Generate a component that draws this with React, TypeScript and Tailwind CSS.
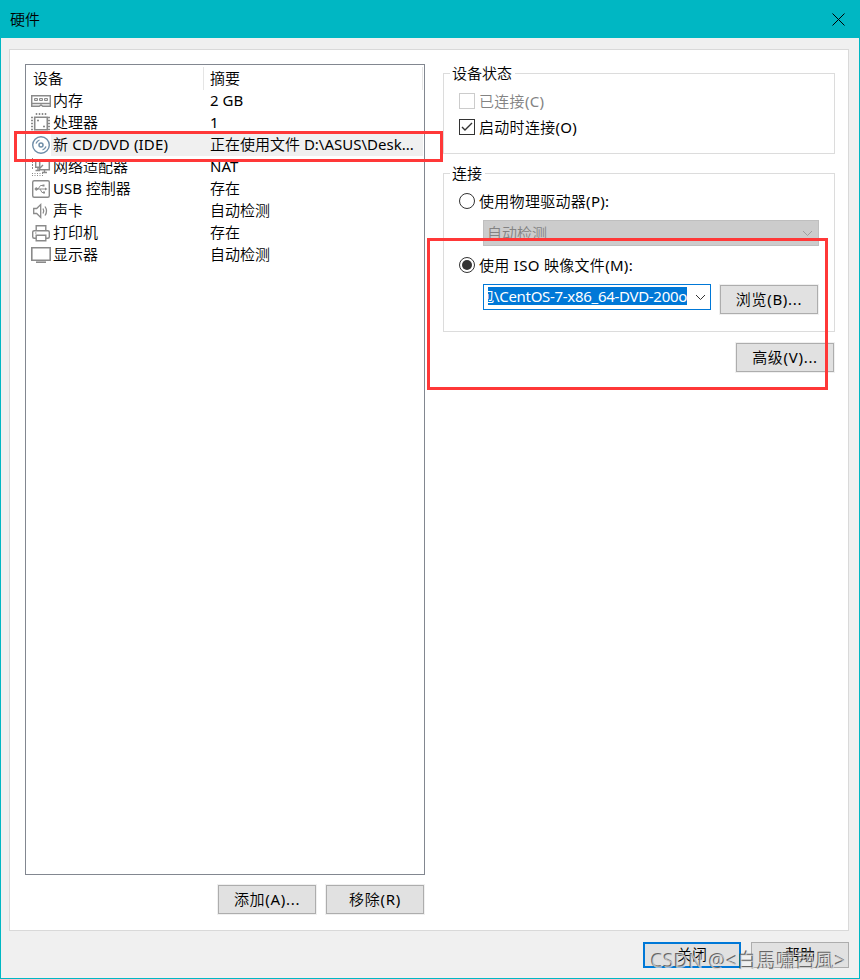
import type { ReactNode } from "react";
import clsx from "clsx";

interface Device {
  name: string;
  summary: string;
  icon: ReactNode;
  selected?: boolean;
}

const MemoryIcon = () => (
  <svg width="20" height="22" viewBox="0 0 20 22" fill="none" stroke="#8a8a8a">
    <path d="M.7 5.700h18.600v7.800H.7z" strokeWidth="1.500" />
    <path d="M3.500 8.500h3v2h-3zM8.500 8.500h3v2h-3zM13.500 8.500h3v2h-3z" fill="#ddd" />
    <path d="M.7 13v3.300h7.500l1.800-1.300 1.800 1.300h7.500V13" strokeWidth="1.500" />
  </svg>
);

const CpuIcon = () => (
  <svg width="20" height="22" viewBox="0 0 20 22" fill="none" stroke="#8a8a8a">
    <path d="M3.700 5.200h12.600v12.600H3.700z" strokeWidth="1.600" />
    <path
      d="M5.500 1v3M8.500 1v3M11.500 1v3M14.500 1v3M5.500 19v2M8.500 19v2M11.500 19v2M14.500 19v2M0 5.500h3M0 8.500h3M0 11.500h3M0 14.500h3M0 17.500h3M17 5.500h3M17 8.500h3M17 11.500h3M17 14.500h3M17 17.500h3"
      strokeDasharray="2 1"
      strokeWidth="1.500"
    />
    <path d="M6 8.500h2M7 7.500v2M12 14.500h2M13 13.500v2" strokeWidth="1.200" />
  </svg>
);

const DiscIcon = () => (
  <svg width="20" height="22" viewBox="0 0 20 22" fill="none" stroke="#6f8da8">
    <circle cx="10" cy="11" r="8.300" strokeWidth="1.400" />
    <circle cx="10" cy="11" r="2" strokeWidth="1.500" />
    <path d="M5 9.500Q6 7 8.500 6M15 12.500Q14 15 11.500 16" strokeWidth="1.300" />
  </svg>
);

const NetworkIcon = () => (
  <svg width="20" height="22" viewBox="0 0 20 22" fill="none" stroke="#8a8a8a">
    <path d="M1.500 2v11.500" strokeDasharray="2 1" />
    <path d="M9 4.700H4.700v6.600H8M7 11.500v3M4.500 14.500H9" strokeWidth="1.400" />
    <path d="M8.700 5.200h9.600v8.600H8.700z" fill="#fff" strokeWidth="1.500" />
    <path d="M9 12L12 9M13.500 14v2M11 16.500h5" strokeWidth="1.400" />
    <path d="M1 17.500h12M1 19.500h12" strokeDasharray="1 1.500" />
  </svg>
);

const UsbIcon = () => (
  <svg width="20" height="22" viewBox="0 0 20 22" fill="none" stroke="#8a8a8a">
    <rect x="1.700" y="2.700" width="16.600" height="16.600" rx="1.500" strokeWidth="1.400" />
    <path d="M5 11h10M7 11l2.500-3.500H12M9 11l2 3.500h1.500" />
    <circle cx="5.300" cy="11" r="1.200" fill="#8a8a8a" />
    <path d="M14 9.500l2.500 1.500-2.500 1.500zM11.500 6.500h2v2h-2zM12 13.500h2v2h-2z" fill="#8a8a8a" stroke="none" />
  </svg>
);

const SoundIcon = () => (
  <svg width="20" height="22" viewBox="0 0 20 22" fill="none" stroke="#8a8a8a" strokeWidth="1.300">
    <path d="M2.700 8.500h3l4-4v13l-4-4h-3z" />
    <path d="M12 8.500q1.500 2.500 0 5M14 6.500q3 4.500 0 9" />
  </svg>
);

const PrinterIcon = () => (
  <svg width="20" height="22" viewBox="0 0 20 22" fill="none" stroke="#8a8a8a" strokeWidth="1.400">
    <path d="M5.200 8.500V3.700h9.600v4.800" />
    <path d="M5 16.300H3.200q-1.500 0-1.500-1.500V10q0-1.300 1.500-1.300h13.600q1.500 0 1.500 1.300v4.800q0 1.500-1.500 1.500H15" />
    <path d="M5.200 13.200h9.600v5.600H5.200z" />
    <path d="M4 11h1.500" strokeWidth="1" />
  </svg>
);

const DisplayIcon = () => (
  <svg width="20" height="22" viewBox="0 0 20 22" fill="none" stroke="#8a8a8a">
    <path d="M.8 3.800h18.400v12.400H.8z" strokeWidth="1.600" />
    <path d="M5 18.200h10" strokeWidth="1.600" />
  </svg>
);

const devices: Device[] = [
  { name: "内存", summary: "2 GB", icon: <MemoryIcon /> },
  { name: "处理器", summary: "1", icon: <CpuIcon /> },
  {
    name: "新 CD/DVD (IDE)",
    summary: "正在使用文件 D:\\ASUS\\Desk...",
    icon: <DiscIcon />,
    selected: true,
  },
  { name: "网络适配器", summary: "NAT", icon: <NetworkIcon /> },
  { name: "USB 控制器", summary: "存在", icon: <UsbIcon /> },
  { name: "声卡", summary: "自动检测", icon: <SoundIcon /> },
  { name: "打印机", summary: "存在", icon: <PrinterIcon /> },
  { name: "显示器", summary: "自动检测", icon: <DisplayIcon /> },
];

function Chevron({ className }: { className?: string }) {
  return (
    <svg width="11" height="7" viewBox="0 0 11 7" fill="none" stroke="currentColor" className={className}>
      <path d="M1 1l4.500 4.500L10 1" />
    </svg>
  );
}

function DialogButton({ children, className }: { children: ReactNode; className?: string }) {
  return (
    <button
      className={clsx(
        "flex w-[98px] shrink-0 items-center justify-center bg-[#e1e1e1] pb-[2px]",
        className ?? "h-[29px] border border-[#adadad] tracking-[0.7px] outline outline-[#f0f0f0]"
      )}
    >
      {children}
    </button>
  );
}

function Group({ title, children, className }: { title: string; children: ReactNode; className?: string }) {
  return (
    <section className={clsx("relative border border-[#dcdcdc]", className)}>
      <h2 className="absolute -top-[11px] left-[6px] bg-white pr-[3px] pl-[2px] leading-5">{title}</h2>
      {children}
    </section>
  );
}

function Radio({ checked }: { checked?: boolean }) {
  return (
    <span className="flex size-4 items-center justify-center rounded-full border border-[#333] bg-white">
      {checked && <span className="size-[10px] rounded-full bg-[#333]" />}
    </span>
  );
}

export default function App() {
  return (
    <div className="relative flex h-[979px] w-[860px] flex-col overflow-hidden border border-[#00b7c3] bg-[#f0f0f0] font-['Noto_Sans','Noto_Sans_CJK_SC_DemiLight','Noto_Sans_CJK_SC_Light','Noto_Sans_CJK_SC',sans-serif] text-[15px] leading-[22px] font-normal whitespace-nowrap text-black">
      <header className="flex h-[37px] shrink-0 items-center justify-between bg-[#00b7c3] pr-[14px] pb-px pl-[9px]">
        <h1>硬件</h1>
        <svg width="13" height="13" viewBox="0 0 13 13" stroke="#000">
          <path d="M.5.5l12 12M12.500.5l-12 12" />
        </svg>
      </header>

      <main className="mt-[11px] ml-2 flex h-[882px] w-[840px] shrink-0 border border-[#d9d9d9] bg-white pt-[14px] pl-[15px]">
        <div className="w-[400px]">
          <div className="h-[811px] border border-[#828790]">
            <div className="flex h-[25px] items-center pt-px pr-px leading-[22px]">
              <div className="h-[23px] w-[178px] border-r border-[#e5e5e5] pl-[7px]">设备</div>
              <div className="h-[23px] flex-1 border-r border-[#e5e5e5] pl-[6px]">摘要</div>
            </div>
            {devices.map((device) => (
              <div key={device.name} className="flex h-[22px] items-center pl-[5px]">
                {device.icon}
                <div
                  className={clsx(
                    "flex h-[22px] flex-1 leading-[21px]",
                    device.selected && "mr-px bg-[#f0f0f0]"
                  )}
                >
                  <span className={clsx("w-[159px] pl-[2px]", device.selected && "tracking-[0.15px]")}>
                    {device.name}
                  </span>
                  <span>{device.summary}</span>
                </div>
              </div>
            ))}
          </div>
          <div className="mt-[10px] flex justify-end gap-[10px] pr-px">
            <DialogButton>添加(A)...</DialogButton>
            <DialogButton>移除(R)</DialogButton>
          </div>
        </div>

        <div className="ml-[18px] w-[392px] pt-[9px]">
          <Group title="设备状态" className="h-[81px] pt-[16px] pl-[15px]">
            <label className="flex h-[22px] items-center gap-1 tracking-[0.3px] text-[#838383]">
              <span className="size-4 border border-[#ccc]" />
              已连接(C)
            </label>
            <label className="mt-1 flex h-[22px] items-center gap-1 tracking-[0.3px]">
              <span className="flex size-4 items-center justify-center border border-[#333]">
                <svg width="12" height="10" viewBox="0 0 12 10" fill="none" stroke="#333" strokeWidth="1.400">
                  <path d="M1 5l3 3 7-7" />
                </svg>
              </span>
              启动时连接(O)
            </label>
          </Group>

          <Group title="连接" className="mt-[19px] h-[159px] pt-[16px] pl-[15px]">
            <label className="flex h-[22px] items-center gap-1 tracking-[0.3px]">
              <Radio />
              使用物理驱动器(P):
            </label>
            <div className="mt-2 ml-6 flex h-[26px] w-[336px] items-center justify-between border border-[#bfbfbf] bg-[#ccc] pr-[5px] pl-[3px] text-[#838383]">
              自动检测
              <Chevron className="text-[#a0a0a0]" />
            </div>
            <label className="mt-2 flex h-[22px] items-center gap-1 tracking-[0.3px]">
              <Radio checked />
              使用 ISO 映像文件(M):
            </label>
            <div className="mt-2 ml-6 flex gap-[9px]">
              <div className="flex h-[26px] w-[228px] items-start justify-between border border-[#0078d7] bg-white pt-[2px] pr-1 pl-1">
                <div className="flex h-[18px] w-[199px] items-center justify-end overflow-hidden bg-[#0078d7] text-white">
                  <span className="tracking-[-0.3px]">包\CentOS-7-x86_64-DVD-200o</span>
                </div>
                <Chevron className="mt-[7px] text-[#333]" />
              </div>
              <div className="pt-px">
                <DialogButton>浏览(B)...</DialogButton>
              </div>
            </div>
          </Group>

          <div className="mt-[11px] flex justify-end pr-px">
            <DialogButton>高级(V)...</DialogButton>
          </div>
        </div>
      </main>

      <footer className="mt-[11px] mr-[10px] flex justify-end gap-[10px]">
        <DialogButton className="h-[26px] border-2 border-[#0078d7]">关闭</DialogButton>
        <DialogButton className="h-[26px] border border-[#adadad]">帮助</DialogButton>
      </footer>

      {/* highlight frames */}
      <div className="absolute top-[130px] left-[13px] h-[31px] w-[429px] border-3 border-[#ff3838]" />
      <div className="absolute top-[237px] left-[426px] h-[152px] w-[401px] border-3 border-[#ff3838]" />

      <div className="absolute top-[946px] left-[650px] text-[19px] leading-7 tracking-[0.45px] text-[#ddd]/70 [text-shadow:-1px_-1px_0_#666]">
        CSDN @&lt;白馬嘯西風&gt;
      </div>
    </div>
  );
}
